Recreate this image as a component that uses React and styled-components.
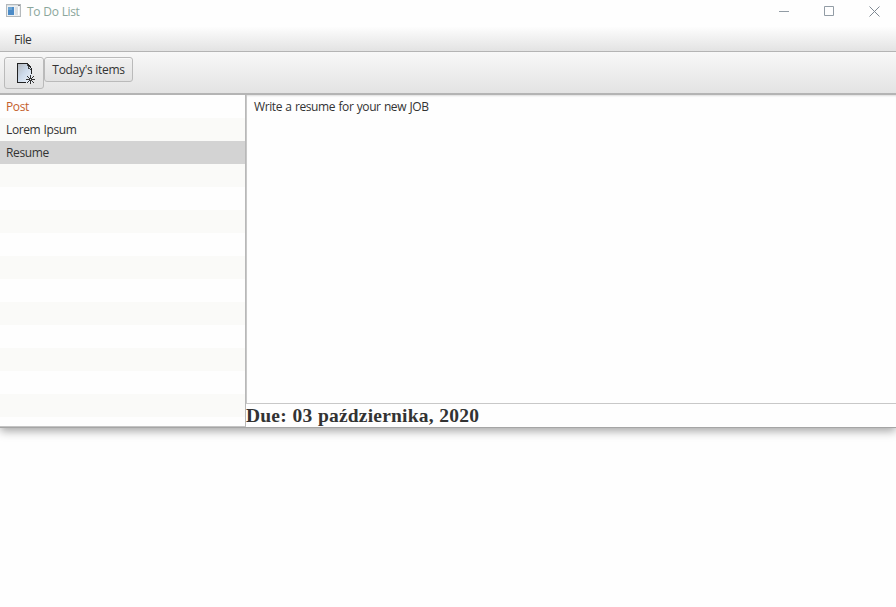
import React from 'react';
import styled, { createGlobalStyle } from 'styled-components';

const GlobalStyle = createGlobalStyle`
  * { box-sizing: border-box; }
  body {
    margin: 0;
    min-height: 100vh;
    background: #fefefe;
    font-family: "Open Sans", "Noto Sans", sans-serif;
    font-size: 12px;
    letter-spacing: -0.38px;
    word-spacing: 0.5px;
    color: #333;
  }
`;

const Window = styled.div`
  height: 428px;
  display: flex;
  flex-direction: column;
  background: #fefefe;
  border-bottom: 1px solid #a5a5a5;
  box-shadow: 0 3px 9px rgba(0, 0, 0, 0.36);
`;

const TitleBar = styled.header`
  flex: none;
  height: 27px;
  display: flex;
  align-items: flex-start;
  padding-left: 6px;
`;

const AppIcon = styled.svg`
  margin-top: 4px;
  flex: none;
`;

const Title = styled.div`
  flex: 1;
  margin-left: 6px;
  line-height: 24px;
  color: #8ba69b;
`;

const Controls = styled.div`
  display: flex;
`;

const ControlButton = styled.button`
  width: ${(p) => p.$width}px;
  height: 22px;
  padding: 0;
  border: 0;
  background: none;
  display: flex;
  align-items: center;
  justify-content: center;
`;

const MenuBar = styled.nav`
  flex: none;
  height: 25px;
  padding-left: 14px;
  line-height: 26px;
  background: linear-gradient(#fdfdfd, #e3e3e3);
  border-bottom: 1px solid #b4b4b4;
`;

const ToolBar = styled.div`
  flex: none;
  height: 43px;
  display: flex;
  align-items: flex-start;
  padding: 5px 4px 0;
  background: linear-gradient(#f8f8f8, #e3e3e3);
  border-bottom: 2px solid #b4b4b4;
`;

const ToolButton = styled.button`
  width: ${(p) => p.$width}px;
  height: ${(p) => p.$height}px;
  padding: 0;
  display: flex;
  align-items: center;
  justify-content: center;
  border: 1px solid #bababa;
  border-radius: 3px;
  background: linear-gradient(#f1f1f1, #e2e2e2);
  box-shadow: inset 0 1px 0 #fafafa;
  font: inherit;
  letter-spacing: -0.3px;
  color: #333;
`;

const Content = styled.main`
  flex: 1;
  min-height: 0;
  display: flex;
`;

const ItemList = styled.ul`
  flex: 0 0 246px;
  margin: 0;
  padding: 0;
  list-style: none;
  overflow: hidden;
  border-right: 1px solid #b8b8b8;
  border-bottom: 1px solid #c4c4c4;
`;

const Item = styled.li`
  height: 23px;
  padding-left: 6px;
  line-height: 24px;
  background: ${(p) => (p.$selected ? '#d3d3d3' : p.$striped ? '#fafaf8' : '#fefefe')};
  color: ${(p) => (p.$due ? '#c4602c' : '#333')};
`;

const Detail = styled.section`
  flex: 1;
  min-width: 0;
  display: flex;
  flex-direction: column;
`;

const Description = styled.div`
  flex: none;
  height: 309px;
  padding-left: 7px;
  line-height: 24px;
  border-bottom: 1px solid #c8c8c8;
  border-left: 1px solid #c8c8c8;
  box-shadow: inset 0 2px 2px -1px #ddd;
`;

const DueDate = styled.div`
  line-height: 23px;
  font-family: "Liberation Serif", "Times New Roman", serif;
  font-size: 19.5px;
  font-weight: 700;
  letter-spacing: 0.2px;
  word-spacing: 0.5px;
`;

const items = [
  { text: 'Post', due: true },
  { text: 'Lorem Ipsum' },
  { text: 'Resume', selected: true },
  ...Array.from({ length: 12 }, () => ({ text: '' })),
];

function WindowIcon() {
  return (
    <AppIcon width="15" height="14" viewBox="0 0 15 14" shapeRendering="crispEdges">
      <rect x="0.5" y="0.5" width="14" height="12" fill="#eceff1" stroke="#b4b9bc" />
      <rect x="1" y="1" width="13" height="1" fill="#dde1e3" />
      <rect x="12" y="1" width="2" height="1" fill="#8b8b92" />
      <rect x="2" y="3" width="6" height="8" fill="#4c8bc7" />
      <rect x="2" y="3" width="4" height="3" fill="#6ba4d3" />
      <rect x="9" y="3" width="3" height="8" fill="#dce0e3" />
      <rect x="12" y="3" width="1" height="8" fill="#fff" />
    </AppIcon>
  );
}

function NewItemIcon() {
  return (
    <svg width="18" height="22" viewBox="0 0 18 22" shapeRendering="crispEdges">
      <defs>
        <linearGradient id="page" x1="0" y1="0" x2="1" y2="1">
          <stop offset="0" stopColor="#b3b7bc" />
          <stop offset="0.5" stopColor="#cddbec" />
          <stop offset="1" stopColor="#eef3f9" />
        </linearGradient>
      </defs>
      <path d="M0.5 0.5H10.5L14.5 6.5V19.5H0.5Z" fill="url(#page)" />
      <path d="M9 19.5H0.5V0.5H10.5L14.5 5.5V11" fill="none" stroke="#222" />
      <path d="M10.5 1L11.5 5.5L14 6.5" fill="none" stroke="#444" />
      <path d="M13.5 12V21M9 16.5H18M10 13L17 20M17 13L10 20" fill="none" stroke="#333" />
      <rect x="13" y="16" width="1" height="1" fill="#eee" />
    </svg>
  );
}

const IconOffset = styled.span`
  display: flex;
  padding: 1px 0 0 4px;
`;

export default function App() {
  return (
    <>
      <GlobalStyle />
      <Window>
        <TitleBar>
          <WindowIcon />
          <Title>To Do List</Title>
          <Controls>
            <ControlButton $width={44} aria-label="Minimize">
              <svg width="11" height="11"><path d="M0 5.5H10" stroke="#929ca5" /></svg>
            </ControlButton>
            <ControlButton $width={46} aria-label="Maximize">
              <svg width="11" height="11"><path d="M.5 .5H9.5V9.5H.5Z" fill="none" stroke="#929ca5" /></svg>
            </ControlButton>
            <ControlButton $width={44} aria-label="Close">
              <svg width="11" height="11"><path d="M.5 .5L10.5 10.5M10.5 .5L.5 10.5" stroke="#7f8993" /></svg>
            </ControlButton>
          </Controls>
        </TitleBar>
        <MenuBar>File</MenuBar>
        <ToolBar>
          <ToolButton $width={40} $height={32} aria-label="New item">
            <IconOffset><NewItemIcon /></IconOffset>
          </ToolButton>
          <ToolButton $width={89} $height={25}>Today's items</ToolButton>
        </ToolBar>
        <Content>
          <ItemList>
            {items.map((item, i) => (
              <Item key={i} $striped={i % 2 === 1} $selected={item.selected} $due={item.due}>
                {item.text}
              </Item>
            ))}
          </ItemList>
          <Detail>
            <Description>Write a resume for your new JOB</Description>
            <DueDate>Due: 03 października, 2020</DueDate>
          </Detail>
        </Content>
      </Window>
    </>
  );
}
